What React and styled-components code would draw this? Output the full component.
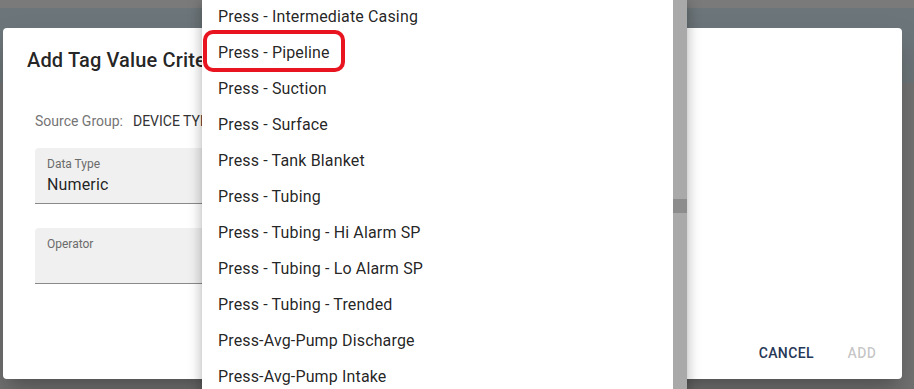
import React from 'react';
import styled, { createGlobalStyle } from 'styled-components';

const GlobalStyle = createGlobalStyle`
  html, body {
    margin: 0;
    padding: 0;
    width: 914px;
    height: 389px;
    overflow: hidden;
    font-family: Roboto, "Liberation Sans", Arial, sans-serif;
  }
`;

const Screen = styled.div`
  position: relative;
  width: 914px;
  height: 389px;
  display: flex;
  flex-direction: column;
  background: #737373;
  overflow: hidden;
`;

const TopStrip = styled.div`
  height: 8px;
  background: #7a7a7a;
`;

const HeaderBand = styled.div`
  height: 75px;
  background: #6c7579;
`;

const Dialog = styled.div`
  position: absolute;
  left: 3px;
  top: 28px;
  width: 899px;
  height: 351px;
  background: #fff;
  border-radius: 4px;
  box-shadow: 0 11px 15px -7px rgba(0, 0, 0, 0.2), 0 24px 38px 3px rgba(0, 0, 0, 0.14);
  display: flex;
  flex-direction: column;
`;

const Title = styled.h2`
  margin: 0;
  padding: 16px 24px;
  font-size: 20px;
  font-weight: 500;
  line-height: 32px;
  letter-spacing: 0.15px;
  color: rgba(0, 0, 0, 0.87);
`;

const Content = styled.div`
  flex: 1;
  padding: 19px 32px 0;
  display: flex;
  flex-direction: column;
`;

const SourceRow = styled.div`
  display: flex;
  gap: 10px;
  font-size: 14px;
  line-height: 20px;
  margin-bottom: 17px;
`;

const SourceLabel = styled.span`
  color: #757575;
`;

const SourceValue = styled.span`
  color: #333;
`;

const Field = styled.div`
  width: 440px;
  height: 56px;
  box-sizing: border-box;
  background: #f0f0f0;
  border-radius: 4px 4px 0 0;
  border-bottom: 1px solid #8a8a8a;
  padding: 8px 12px 0;
  margin-bottom: 24px;
  display: flex;
  flex-direction: column;
`;

const FieldLabel = styled.span`
  font-size: 12px;
  line-height: 16px;
  color: #6b6b6b;
`;

const FieldValue = styled.span`
  margin-top: 1px;
  font-size: 16px;
  line-height: 24px;
  letter-spacing: 0.15px;
  color: rgba(0, 0, 0, 0.87);
`;

const Actions = styled.div`
  display: flex;
  justify-content: flex-end;
  gap: 8px;
  padding: 8px;
`;

const TextButton = styled.button`
  min-width: 64px;
  padding: 6px 8px;
  border: none;
  background: none;
  font-family: inherit;
  font-size: 14px;
  font-weight: 500;
  line-height: 24px;
  letter-spacing: 0.4px;
  text-transform: uppercase;
  color: ${p => (p.disabled ? 'rgba(0, 0, 0, 0.24)' : '#263857')};
`;

const Menu = styled.div`
  position: absolute;
  left: 202px;
  top: -2px;
  width: 485px;
  height: 400px;
  background: #fff;
  display: flex;
  box-shadow: 0 5px 5px -3px rgba(0, 0, 0, 0.2), 0 8px 10px 1px rgba(0, 0, 0, 0.14),
    0 3px 14px 2px rgba(0, 0, 0, 0.12);
`;

const MenuList = styled.ul`
  flex: 1;
  margin: 0;
  padding: 0;
  list-style: none;
`;

const MenuItem = styled.li`
  height: 36px;
  display: flex;
  align-items: center;
  padding-left: 16px;
  font-size: 16px;
  letter-spacing: 0.15px;
  color: rgba(0, 0, 0, 0.87);
`;

const Highlight = styled.span`
  position: relative;
  &::after {
    content: '';
    position: absolute;
    left: -15px;
    right: -15px;
    top: -13px;
    bottom: -10px;
    border: 4px solid #e8141f;
    border-radius: 10px;
  }
`;

const ScrollTrack = styled.div`
  width: 14px;
  background: #a9a9a9;
`;

const ScrollThumb = styled.div`
  margin-top: 201px;
  height: 14px;
  background: #8c8c8c;
`;

const options = [
  'Press - Intermediate Casing',
  'Press - Pipeline',
  'Press - Suction',
  'Press - Surface',
  'Press - Tank Blanket',
  'Press - Tubing',
  'Press - Tubing - Hi Alarm SP',
  'Press - Tubing - Lo Alarm SP',
  'Press - Tubing - Trended',
  'Press-Avg-Pump Discharge',
  'Press-Avg-Pump Intake',
];

export default function App() {
  return (
    <Screen>
      <GlobalStyle />
      <TopStrip />
      <HeaderBand />
      <Dialog>
        <Title>Add Tag Value Criteria</Title>
        <Content>
          <SourceRow>
            <SourceLabel>Source Group:</SourceLabel>
            <SourceValue>DEVICE TYPE</SourceValue>
          </SourceRow>
          <Field>
            <FieldLabel>Data Type</FieldLabel>
            <FieldValue>Numeric</FieldValue>
          </Field>
          <Field>
            <FieldLabel>Operator</FieldLabel>
          </Field>
        </Content>
        <Actions>
          <TextButton>Cancel</TextButton>
          <TextButton disabled>Add</TextButton>
        </Actions>
      </Dialog>
      <Menu>
        <MenuList>
          {options.map(o => (
            <MenuItem key={o}>
              {o === 'Press - Pipeline' ? <Highlight>{o}</Highlight> : o}
            </MenuItem>
          ))}
        </MenuList>
        <ScrollTrack>
          <ScrollThumb />
        </ScrollTrack>
      </Menu>
    </Screen>
  );
}
